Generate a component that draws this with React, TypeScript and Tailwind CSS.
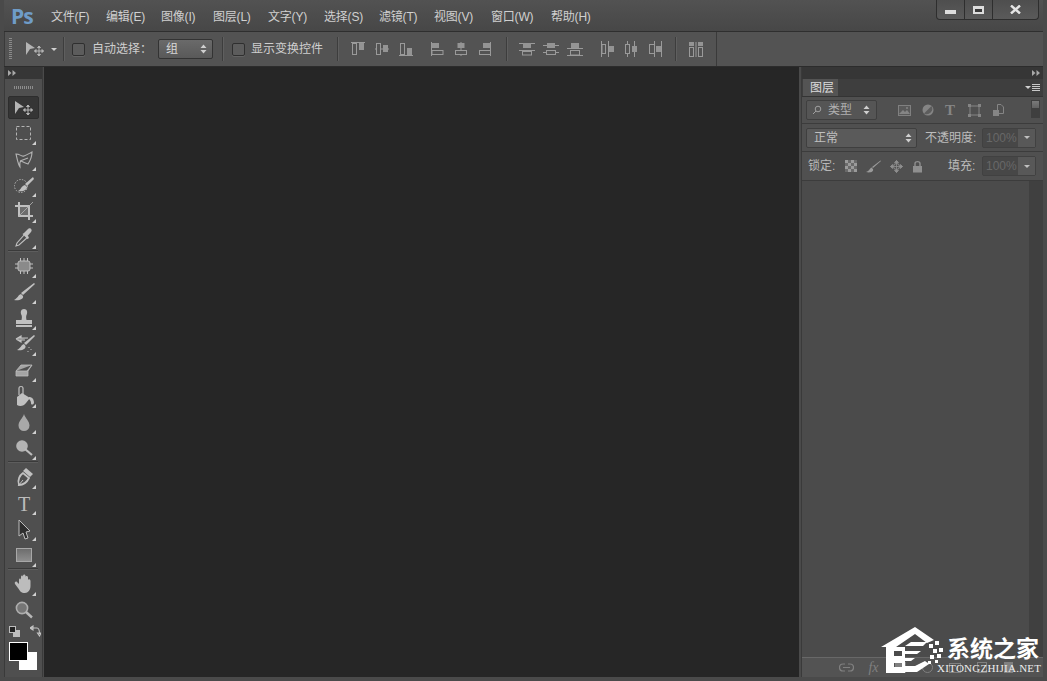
import React from "react";

const F = "#b4b4b4";
const font = "font-['Liberation_Sans','Noto_Sans_CJK_SC',sans-serif]";

const menus = [
  ["文件(F)", 39], ["编辑(E)", 39], ["图像(I)", 36], ["图层(L)", 39], ["文字(Y)", 40],
  ["选择(S)", 39], ["滤镜(T)", 39], ["视图(V)", 41], ["窗口(W)", 44], ["帮助(H)", 42],
] as const;

function Glyph({ children, w = 24, h = 24, className = "" }: { children: React.ReactNode; w?: number; h?: number; className?: string }) {
  return (
    <svg width={w} height={h} viewBox={`0 0 ${w} ${h}`} className={className}>
      {children}
    </svg>
  );
}

function MoveIcon() {
  return (
    <Glyph w={20} h={16}>
      <path d="M1 1 L10 7 L5 8 L1 14 Z" fill={F} />
      <path d="M14 5 V15 M9.5 10 H18.5 M14 5 l-1.5 1.5 h3 Z M14 15 l-1.5 -1.5 h3 Z M9.5 10 l1.5 -1.5 v3 Z M18.5 10 l-1.5 -1.5 v3 Z" stroke={F} strokeWidth="1" fill={F} />
    </Glyph>
  );
}

const tools: Record<string, React.ReactNode> = {
  marquee: <rect x="4.5" y="5.5" width="14" height="13" fill="none" stroke={F} strokeWidth="1" strokeDasharray="3 2" />,
  lasso: <path d="M4 7 C8 7 10 10 12 9 C15 8 18 6 20 5 C20 9 18 14 16 17 C13 16 11 15 9 14 C7 15 8 18 8 20 C6 17 5 11 4 7 Z M8 14 L16 11" fill="none" stroke={F} strokeWidth="1.1" />,
  quick: (
    <>
      <ellipse cx="9" cy="13" rx="6.5" ry="6.5" fill="none" stroke={F} strokeDasharray="1.4 1.4" />
      <path d="M21 4 L13 11 L15 13 L22 6 Z M13 12 C9 13 9 17 6 18 C11 19 15 17 15 14 Z" fill="#c0c0c0" />
    </>
  ),
  crop: (
    <>
      <path d="M7 3 V17 H21 M3 7 H17 V21" fill="none" stroke="#c0c0c0" strokeWidth="2" />
      <rect x="8" y="8" width="8" height="8" fill="#6d6d6d" />
      <path d="M6 18 L21 3" stroke={F} strokeWidth="0.8" />
    </>
  ),
  eyedrop: (
    <>
      <path d="M4 21 L5 18 L13 9 L16 12 L7 20 Z" fill="none" stroke="#c0c0c0" strokeWidth="1.1" />
      <path d="M12 8 L16 4 C18 2 21 5 19 7 L15.5 11 L17 13 L15.5 14 L10.5 9 Z" fill="#c0c0c0" />
    </>
  ),
  heal: (
    <>
      <rect x="6" y="7" width="12" height="10" rx="2" fill="#8a8a8a" stroke="#bcbcbc" strokeWidth="1" />
      <path d="M8.5 4 V7 M12 4 V7 M15.5 4 V7 M8.5 17 V20 M12 17 V20 M15.5 17 V20 M3 10 H6 M3 14 H6 M18 10 H21 M18 14 H21" stroke="#c0c0c0" strokeWidth="1" />
    </>
  ),
  brush: <path d="M22 3 L23 4 L11 15 L9 13 Z M9 14 C6 15 6 18 2 20 C7 21 12 19 11 16 Z" fill="#c0c0c0" />,
  stamp: <path d="M12 3 C15 3 16 6 14.5 9 C14 10 14 12 14.5 14 H20 V18 H4 V14 H9.5 C10 12 10 10 9.5 9 C8 6 9 3 12 3 Z M4 19 H20 V21 H4 Z" fill="#c0c0c0" />,
  history: (
    <>
      <path d="M22 3 L23 4 L14 13 L12 11 Z M12 12 C9 13 9 16 5 18 C10 19 14 17 13.5 14 Z" fill="#c0c0c0" />
      <path d="M4 7 L9 4 V6 H16 M4 7 L9 10 V8 H13" stroke="#c0c0c0" strokeWidth="1.2" fill="#c0c0c0" />
      <path d="M17 15 v1 M19 17 v1 M16 19 v1" stroke="#c0c0c0" />
    </>
  ),
  eraser: <path d="M9 7 H20 L16 13 V18 H4 V13 Z M4 13 H15 L20 7" fill="#a4a4a4" stroke="#bcbcbc" strokeWidth="0.8" />,
  bucket: (
    <>
      <path d="M10 9 L5 13 V21 C8 23 12 22 14 19 L18 14 Z" fill="#c0c0c0" />
      <path d="M7 11 V4 C7 2 11 2 11 4 V11" fill="none" stroke="#c0c0c0" strokeWidth="1.2" />
      <path d="M17 13 C20 13 22 15 22 19 C21 21 19 21 19 19 C19 17 18 16 17 15 Z" fill="#c0c0c0" />
    </>
  ),
  blur: <path d="M12 4 C13 8 17.5 11 17.5 15.5 A5.5 5.5 0 0 1 6.5 15.5 C6.5 11 11 8 12 4 Z" fill="#a8a8a8" />,
  dodge: (
    <>
      <circle cx="10" cy="10" r="5.8" fill="#b4b4b4" />
      <path d="M13 13 L20 19" stroke="#bcbcbc" strokeWidth="2.2" />
    </>
  ),
  pen: (
    <>
      <path d="M7 20 C5 15 8 10 11 8 L17 13 C15 17 11 20 7 20 Z" fill="none" stroke="#c0c0c0" strokeWidth="1.8" />
      <path d="M11 6 L14 3 L21 9 L18 12 Z" fill="#c0c0c0" />
      <path d="M6 21 L11 15" stroke="#c0c0c0" strokeWidth="1" />
    </>
  ),
  text: <text x="12" y="20" textAnchor="middle" fontFamily="Liberation Serif" fontSize="20" fill="#bcbcbc">T</text>,
  path: <path d="M7 3 L18 14 L14 15 L16 21 L13 22 L11 16 L7 19 Z" fill="#2e2e2e" stroke="#bcbcbc" strokeWidth="1" />,
  rect: (
    <>
      <defs>
        <linearGradient id="rg" x1="0" y1="0" x2="0" y2="1">
          <stop offset="0" stopColor="#6c6c6c" />
          <stop offset="1" stopColor="#8f8f8f" />
        </linearGradient>
      </defs>
      <rect x="4.5" y="5.5" width="15" height="13" fill="url(#rg)" stroke="#a8a8a8" strokeWidth="1" />
    </>
  ),
  hand: <path d="M7 8 C7 6 9 6 9 8 V5 C9 3 11 3 11 5 V4 C11 2 13.5 2 13.5 4 V5 C13.5 3.5 16 3.5 16 5.5 V8 C16 7 18.5 7 18.5 9 V14 C18.5 18 16 21 13 21 C9 21 8 19 6 16 L3 12 C2 10 4 9 5 10 L7 12 Z" fill="#bcbcbc" />,
  zoom: (
    <>
      <circle cx="10" cy="10" r="5.6" fill="#767676" stroke="#aeaeae" strokeWidth="1.6" />
      <path d="M14 14 L20 19.5" stroke="#b8b8b8" strokeWidth="2.4" />
    </>
  ),
};

function Tool({ name, corner = true }: { name: string; corner?: boolean }) {
  return (
    <div className="relative h-[26px] w-[31px] flex items-center justify-center">
      <Glyph>{tools[name]}</Glyph>
      {corner && <span className="absolute right-[3px] bottom-[1px] w-0 h-0 border-l-[4px] border-l-transparent border-b-[4px] border-b-[#d0d0d0]" />}
    </div>
  );
}

const Sep = () => <div className="h-px w-[30px] mb-px bg-[#3a3a3a] border-b border-[#5d5d5d] box-content" />;

function Align({ kind }: { kind: number }) {
  const s = "#9a9a9a";
  const f = "#949494";
  const parts: Record<number, React.ReactNode> = {
    0: <><path d="M1 1.5 H15" stroke={s} /><rect x="2.5" y="2.5" width="4" height="11" fill="none" stroke={s} /><rect x="9" y="2" width="5" height="7" fill={f} /></>,
    1: <><path d="M1 8 H15" stroke={s} /><rect x="2.5" y="2.5" width="4" height="11" fill="#545454" stroke={s} /><rect x="9" y="4" width="5" height="7" fill={f} /></>,
    2: <><path d="M1 14.5 H15" stroke={s} /><rect x="2.5" y="2.5" width="4" height="11" fill="none" stroke={s} /><rect x="9" y="7" width="5" height="7" fill={f} /></>,
    3: <><path d="M2.5 1 V15" stroke={s} /><rect x="3" y="9.5" width="11" height="4" fill="none" stroke={s} /><rect x="3" y="2" width="7" height="5" fill={f} /></>,
    4: <><path d="M8 1 V15" stroke={s} /><rect x="2.5" y="9.5" width="11" height="4" fill="#545454" stroke={s} /><rect x="4.5" y="2" width="7" height="5" fill={f} /></>,
    5: <><path d="M13.5 1 V15" stroke={s} /><rect x="2.5" y="9.5" width="11" height="4" fill="none" stroke={s} /><rect x="6" y="2" width="7" height="5" fill={f} /></>,
    6: <><path d="M0 2.5 H16 M0 9.5 H16" stroke={s} /><rect x="4" y="2" width="8" height="5" fill={f} /><rect x="3.5" y="10.5" width="9" height="3.5" fill="none" stroke={s} /></>,
    7: <><path d="M0 4.5 H16 M0 11.5 H16" stroke={s} /><rect x="4" y="2" width="8" height="5" fill={f} /><rect x="3.5" y="9.5" width="9" height="4" fill="#545454" stroke={s} /></>,
    8: <><path d="M0 7.5 H16 M0 14.5 H16" stroke={s} /><rect x="4" y="2" width="8" height="5" fill={f} /><rect x="3.5" y="9.5" width="9" height="4.5" fill="none" stroke={s} /></>,
    9: <><path d="M2.5 0 V16 M9.5 0 V16" stroke={s} /><rect x="3" y="3.5" width="3.5" height="9" fill="none" stroke={s} /><rect x="10" y="5" width="5" height="6" fill={f} /></>,
    10: <><path d="M4.5 0 V16 M11.5 0 V16" stroke={s} /><rect x="2.5" y="3.5" width="4" height="9" fill="#545454" stroke={s} /><rect x="9" y="5" width="5" height="6" fill={f} /></>,
    11: <><path d="M7.5 0 V16 M14.5 0 V16" stroke={s} /><rect x="2.5" y="3.5" width="5" height="9" fill="none" stroke={s} /><rect x="9" y="5" width="5" height="6" fill={f} /></>,
    12: <><rect x="1" y="1" width="5" height="4" fill={f} /><rect x="10" y="1" width="5" height="4" fill={f} /><rect x="1.5" y="6.5" width="4" height="9" fill="none" stroke={s} /><rect x="10.5" y="6.5" width="4" height="9" fill="none" stroke={s} /><path d="M8 1 V16" stroke={s} /></>,
  };
  return <Glyph w={16} h={16}>{parts[kind]}</Glyph>;
}

const Divider = () => <div className="w-px h-[24px] bg-[#3d3d3d] border-r border-[#5f5f5f] box-content" />;

const Updown = () => (
  <svg width="7" height="10" viewBox="0 0 7 10">
    <path d="M3.5 0.5 L6.5 4 H0.5 Z M3.5 9.5 L0.5 6 H6.5 Z" fill="#cfcfcf" />
  </svg>
);

const Check = () => <div className="w-[13px] h-[13px] rounded-[2px] bg-[#5c5c5c] border border-[#2f2f2f] shadow-[0_1px_0_#636363]" />;

function Percent() {
  return (
    <div className="flex h-[20px] w-[54px] rounded-[2px] border border-[#414141] bg-[#474747]">
      <div className="w-[35px] text-[12px] leading-[18px] pl-[3px] text-[#686868]">100%</div>
      <div className="flex-1 bg-[#585858] flex items-center justify-center">
        <span className="w-0 h-0 border-l-[3px] border-r-[3px] border-t-[3px] border-l-transparent border-r-transparent border-t-[#c0c0c0]" />
      </div>
    </div>
  );
}

const DoubleArrow = () => (
  <svg width="8" height="6" viewBox="0 0 8 6">
    <path d="M0 0 L3.5 3 L0 6 Z M4.5 0 L8 3 L4.5 6 Z" fill="#a8a8a8" />
  </svg>
);

const FootIcon = ({ children }: { children: React.ReactNode }) => <div className="w-[15px] flex items-center justify-center">{children}</div>;

export default function App() {
  const leftTools1 = ["marquee", "lasso", "quick", "crop", "eyedrop"];
  const leftTools2 = ["heal", "brush", "stamp", "history", "eraser", "bucket", "blur", "dodge"];
  const leftTools3 = ["pen", "text", "path", "rect"];
  return (
    <div className={`relative w-[1047px] h-[681px] overflow-hidden flex flex-col bg-[#4a4a4a] text-[#cfcfcf] ${font}`}>
      {/* Title bar */}
      <div className="relative h-[32px] shrink-0 flex items-start bg-gradient-to-b from-[#525252] to-[#474747] border-b border-[#2f2f2f] mx-[4px]">
        <div className="ml-[7px] mt-[1px] w-[30px] text-[21px] leading-[30px] font-bold text-[#6f9cc8] tracking-[-1px] font-['Open_Sans',sans-serif]">Ps</div>
        <div className="flex ml-[10px] mt-[9px] gap-[16px] text-[12px] leading-[17px] text-[#d0d0d0]">
          {menus.map(([t, w]) => (
            <div key={t} style={{ width: w }} className="whitespace-nowrap tracking-[-0.2px]">{t}</div>
          ))}
        </div>
        <div className="ml-auto mr-[4px] flex h-[20px] w-[103px] rounded-b-[4px] border border-t-0 border-[#2e2e2e] bg-gradient-to-b from-[#4e4e4e] to-[#5a5a5a]">
          <div className="w-[28px] border-r border-[#2e2e2e] flex items-center justify-center"><div className="w-[11px] h-[4px] mt-[4px] bg-[#dddddd]" /></div>
          <div className="w-[28px] border-r border-[#2e2e2e] flex items-center justify-center"><div className="w-[11px] h-[8px] border-[2px] border-t-[3px] border-[#dddddd] bg-[#3a3a3a]" /></div>
          <div className="flex-1 flex items-center justify-center">
            <svg width="11" height="9" viewBox="0 0 11 9"><path d="M1 0.5 L10 8.5 M10 0.5 L1 8.5" stroke="#e4e4e4" strokeWidth="2.4" /></svg>
          </div>
        </div>
      </div>

      {/* Options bar */}
      <div className="h-[34px] shrink-0 mx-[4px] flex items-center bg-[#535353] border-l border-[#3a3a3a]">
        <div className="ml-[4px] w-[3px] h-[22px] bg-[repeating-linear-gradient(to_bottom,#8a8a8a_0,#8a8a8a_1px,transparent_1px,transparent_2px)]" />
        <div className="ml-[13px]"><MoveIcon /></div>
        <span className="ml-[6px] w-0 h-0 border-l-[3px] border-r-[3px] border-t-[3px] border-l-transparent border-r-transparent border-t-[#d0d0d0]" />
        <div className="ml-[6px]"><Divider /></div>
        <div className="ml-[7px]"><Check /></div>
        <div className="ml-[7px] w-[58px] text-[12px] whitespace-nowrap">自动选择：</div>
        <div className="ml-[8px] h-[20px] w-[55px] flex items-center rounded-[2px] border border-[#333333] bg-gradient-to-b from-[#6a6a6a] to-[#595959] pl-[7px] pr-[5px] text-[12px] text-[#d8d8d8]">
          <span>组</span><span className="ml-auto"><Updown /></span>
        </div>
        <div className="ml-[9px]"><Divider /></div>
        <div className="ml-[8px]"><Check /></div>
        <div className="ml-[6px] w-[72px] text-[12px] whitespace-nowrap">显示变换控件</div>
        <div className="ml-[14px]"><Divider /></div>
        <div className="ml-[11px] flex gap-[8px]">{[0, 1, 2].map((k) => <Align key={k} kind={k} />)}</div>
        <div className="ml-[15px] flex gap-[8px]">{[3, 4, 5].map((k) => <Align key={k} kind={k} />)}</div>
        <div className="ml-[13px]"><Divider /></div>
        <div className="ml-[11px] flex gap-[8px]">{[6, 7, 8].map((k) => <Align key={k} kind={k} />)}</div>
        <div className="ml-[16px] flex gap-[8px]">{[9, 10, 11].map((k) => <Align key={k} kind={k} />)}</div>
        <div className="ml-[12px]"><Divider /></div>
        <div className="ml-[11px]"><Align kind={12} /></div>
        <div className="ml-[12px] w-px h-[34px] bg-[#3a3a3a]" />
      </div>

      {/* Work area */}
      <div className="flex-1 min-h-0 mx-[4px] mb-[4px] flex border-t border-[#2c2c2c]">
        {/* Tool strip */}
        <div className="w-[39px] shrink-0 flex flex-col bg-[#4f4f4f] border-x border-[#3a3a3a]">
          <div className="h-[12px] shrink-0 bg-[#363636] flex items-center pl-[3px]"><DoubleArrow /></div>
          <div className="h-[17px] shrink-0 flex items-center justify-center">
            <div className="w-[20px] h-[3px] bg-[repeating-linear-gradient(to_right,#8d8d8d_0,#8d8d8d_1px,transparent_1px,transparent_2px)]" />
          </div>
          <div className="pl-[3px] flex flex-col">
            <div className="h-[23px] w-[31px] mb-[1px] flex items-center justify-center rounded-[2px] bg-[#353535] border border-[#2d2d2d]"><MoveIcon /></div>
            {leftTools1.map((n) => <Tool key={n} name={n} />)}
            <Sep />
            {leftTools2.map((n) => <Tool key={n} name={n} />)}
            <Sep />
            {leftTools3.map((n) => <Tool key={n} name={n} />)}
            <Sep />
            <Tool name="hand" />
            <Tool name="zoom" corner={false} />
            <div className="flex items-center h-[16px] pl-[1px] gap-[10px]">
              <svg width="11" height="11" viewBox="0 0 11 11"><rect x="4" y="4" width="7" height="7" fill="#bdbdbd" /><rect x="0.5" y="0.5" width="6" height="6" fill="#222222" stroke="#bdbdbd" /></svg>
              <svg width="11" height="12" viewBox="0 0 11 12"><path d="M1 3 H7 C9 3 9.5 5 9.5 9 M9.5 11 L7.5 8 H11 Z M0 3 L3 1 V5 Z" fill="none" stroke="#c4c4c4" strokeWidth="1.1" /></svg>
            </div>
            <div className="relative h-[32px] mt-[1px]">
              <div className="absolute left-[11px] top-[12px] w-[18px] h-[18px] bg-white" />
              <div className="absolute left-[1px] top-[2px] w-[19px] h-[19px] bg-black border border-white" />
            </div>
          </div>
        </div>

        {/* Canvas */}
        <div className="ml-[1px] flex-1 bg-[#262626]" />

        {/* Right panel */}
        <div className="ml-[2px] w-[242px] shrink-0 flex flex-col bg-[#4b4b4b] border-l border-[#3a3a3a]">
          <div className="h-[12px] shrink-0 bg-[#363636] flex items-center justify-end pr-[3px]"><DoubleArrow /></div>
          <div className="h-[17px] shrink-0 flex bg-[#3e3e3e] border-b border-[#343434] box-content">
            <div className="w-[35px] bg-[#545454] text-[12px] leading-[18px] pl-[7px] text-[#dcdcdc] ml-px">图层</div>
            <div className="ml-auto mr-[3px] flex items-center gap-px">
              <span className="w-0 h-0 border-l-[3px] border-r-[3px] border-t-[3px] border-l-transparent border-r-transparent border-t-[#d0d0d0]" />
              <div className="w-[8px] h-[7px] bg-[repeating-linear-gradient(to_bottom,#c8c8c8_0,#c8c8c8_1px,transparent_1px,transparent_2px)]" />
            </div>
          </div>

          {/* filter row */}
          <div className="h-[27px] shrink-0 flex items-center pl-[4px] bg-[#505050] border-b border-[#3c3c3c] shadow-[0_1px_0_#5c5c5c]">
            <div className="h-[20px] w-[71px] flex items-center rounded-[2px] border border-[#3f3f3f] bg-[#555555] pl-[5px] pr-[6px] text-[12px] text-[#b0b0b0]">
              <svg width="10" height="10" viewBox="0 0 10 10"><circle cx="6" cy="4" r="2.8" fill="none" stroke="#a0a0a0" /><path d="M4 6 L1 9" stroke="#a0a0a0" /></svg>
              <span className="ml-[6px]">类型</span>
              <span className="ml-auto"><Updown /></span>
            </div>
            <div className="ml-[21px] flex items-center gap-[11px]">
              <svg width="13" height="11" viewBox="0 0 13 11"><rect x="0.5" y="0.5" width="12" height="10" fill="#5a5a5a" stroke="#808080" /><path d="M1 9 L5 5 L7 7 L9 5 L12 9 Z" fill="#858585" /><circle cx="9" cy="3" r="1" fill="#858585" /></svg>
              <svg width="12" height="12" viewBox="0 0 12 12"><circle cx="6" cy="6" r="5.5" fill="#858585" /><path d="M9.5 2 L2 9.5 A5.5 5.5 0 0 0 9.5 2 Z" fill="#5d5d5d" /></svg>
              <span className="font-['Liberation_Serif',serif] text-[15px] leading-none font-bold text-[#858585] w-[12px]">T</span>
              <svg width="13" height="13" viewBox="0 0 13 13"><rect x="2" y="2" width="9" height="9" fill="none" stroke="#858585" /><path d="M0 0 h3 v3 h-3 Z M10 0 h3 v3 h-3 Z M0 10 h3 v3 h-3 Z M10 10 h3 v3 h-3 Z" fill="#858585" /></svg>
              <svg width="12" height="13" viewBox="0 0 12 13"><path d="M5.5 0.5 H9 L11.5 3 V9.5 H5.5 Z" fill="none" stroke="#858585" /><rect x="1" y="6" width="6" height="6" fill="#858585" /></svg>
            </div>
            <div className="ml-auto mr-[3px] flex flex-col w-[9px] h-[20px]">
              <div className="h-[9px] bg-gradient-to-b from-[#7a7a7a] to-[#626262] border border-[#3f3f3f]" />
              <div className="h-[9px] bg-[#3f3f3f]" />
            </div>
          </div>

          {/* blend row */}
          <div className="h-[28px] shrink-0 flex items-center pl-[4px] text-[12px] bg-[#505050] border-b border-[#3c3c3c] shadow-[0_1px_0_#5c5c5c]">
            <div className="h-[20px] w-[111px] flex items-center rounded-[2px] border border-[#3f3f3f] bg-[#5a5a5a] pl-[7px] pr-[4px] text-[#c0c0c0]">
              <span>正常</span><span className="ml-auto"><Updown /></span>
            </div>
            <div className="ml-[8px] w-[54px] whitespace-nowrap text-[#bcbcbc]">不透明度:</div>
            <div className="ml-[3px]"><Percent /></div>
          </div>

          {/* lock row */}
          <div className="h-[29px] shrink-0 flex items-center pl-[6px] text-[12px] bg-[#505050] border-b border-[#3c3c3c]">
            <span className="w-[30px] whitespace-nowrap text-[#b8b8b8]">锁定:</span>
            <div className="ml-[7px] flex items-center gap-[9px]">
              <svg width="12" height="12" viewBox="0 0 12 12"><rect width="12" height="12" fill="#6a6a6a" /><path d="M0 0h3v3H0Z M6 0h3v3H6Z M3 3h3v3H3Z M9 3h3v3H9Z M0 6h3v3H0Z M6 6h3v3H6Z M3 9h3v3H3Z M9 9h3v3H9Z" fill="#9a9a9a" /></svg>
              <svg width="15" height="13" viewBox="0 0 15 13"><path d="M14.5 0.5 L15 1 L7 8 L6 7 Z M5.5 7.5 C4 8 3.5 11 0 12 C4 13 8 12 7 9 Z" fill="#9a9a9a" /></svg>
              <svg width="13" height="13" viewBox="0 0 13 13"><path d="M6.5 0.5 V12.5 M0.5 6.5 H12.5 M6.5 0.5 L4.5 2.5 H8.5 Z M6.5 12.5 L4.5 10.5 H8.5 Z M0.5 6.5 L2.5 4.5 V8.5 Z M12.5 6.5 L10.5 4.5 V8.5 Z" stroke="#8f8f8f" fill="#8f8f8f" strokeWidth="0.8" /><circle cx="6.5" cy="6.5" r="3" fill="none" stroke="#8f8f8f" /></svg>
              <svg width="11" height="13" viewBox="0 0 11 13"><path d="M3 6 V3.5 C3 1 8 1 8 3.5 V6" fill="none" stroke="#8f8f8f" strokeWidth="1.4" /><rect x="1" y="6" width="9" height="6.5" fill="#8f8f8f" /></svg>
            </div>
            <span className="ml-[25px] w-[29px] whitespace-nowrap text-[#bcbcbc]">填充:</span>
            <div className="ml-[5px]"><Percent /></div>
          </div>

          {/* list */}
          <div className="flex-1 min-h-0 flex">
            <div className="flex-1" />
            <div className="w-[14px] bg-[#404040]" />
          </div>

          {/* footer */}
          <div className="h-[20px] shrink-0 bg-[#535353] border-t border-[#686868] flex items-center justify-end pr-[27px] gap-[12px]">
            <FootIcon><svg width="15" height="9" viewBox="0 0 15 9"><path d="M6 1 H4 A3.2 3.2 0 0 0 4 8 H6 M9 1 H11 A3.2 3.2 0 0 1 11 8 H9 M4 4.5 H11" fill="none" stroke="#808080" strokeWidth="1.2" /></svg></FootIcon>
            <FootIcon><span className="font-['Liberation_Serif',serif] italic text-[14px] leading-none text-[#808080]">fx</span></FootIcon>
            <FootIcon><div className="w-[11px] h-[11px] bg-[#808080]" /></FootIcon>
            <FootIcon><div className="w-[11px] h-[11px] rounded-full border border-[#808080]" /></FootIcon>
            <FootIcon><div className="w-[12px] h-[10px] border border-[#808080]" /></FootIcon>
            <FootIcon><div className="w-[10px] h-[11px] border border-[#808080]" /></FootIcon>
            <FootIcon><div className="w-[9px] h-[11px] bg-[#808080]" /></FootIcon>
          </div>
        </div>
      </div>

      {/* Watermark */}
      <div className="absolute left-[865px] top-[622px] w-[182px] h-[59px]">
        <svg width="82" height="56" viewBox="0 0 82 56" className="absolute left-0 top-0">
          <path d="M16 25 L50 5 L69 18 L62 21 L50 12 L31 25 H29 V51 H21 V25 Z" fill="#ffffff" />
          <path d="M28 25 H37 V29 H28 Z M28 34 H37 V41 H28 Z M28 45 H37 V51 H28 Z M37 25 H40 V51 H37 Z" fill="#ffffff" />
          <path d="M40 24 L46 20 H62 L58 24 Z M40 29 H56 L52 32 H40 Z M40 36 H50 L46 39 H40 Z M40 44 H50 L60 39 L64 42 L52 50 H40 Z" fill="#ffffff" />
          <path d="M64 22 h4 v4 h-4 Z M70 19 h4 v4 h-4 Z M68 27 h4 v4 h-4 Z M74 26 h4 v4 h-4 Z M72 32 h4 v4 h-4 Z M65 33 h4 v4 h-4 Z M70 38 h3 v3 h-3 Z M63 39 h3 v3 h-3 Z" fill="#ffffff" />
        </svg>
        <div className="absolute left-[82px] top-[11px] text-[23px] leading-[28px] font-bold text-white whitespace-nowrap font-['Noto_Sans_CJK_SC',sans-serif]">系统之家</div>
        <div className="absolute left-[72px] top-[40px] text-[11px] leading-[12px] text-[#eeeeee] whitespace-nowrap tracking-[0.25px] font-['Liberation_Serif',serif]">XITONGZHIJIA.NET</div>
      </div>
    </div>
  );
}
